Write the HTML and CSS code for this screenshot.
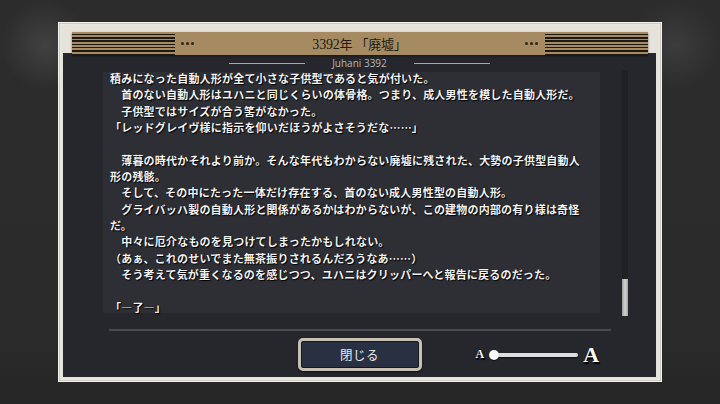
FILE: index.html
```html
<!DOCTYPE html>
<html lang="ja">
<head>
    <meta charset="UTF-8">
    <title>ログ 3392年「廃墟」</title>
    <link rel="stylesheet" href="styles.css">
</head>
<body>
    <div class="stage">
        <div class="frame">
            <div class="band">
                <div class="stripes"></div>
                <div class="dots"><i></i><i></i><i></i></div>
                <div class="title"><span class="num">3392</span>年 「廃墟」</div>
                <div class="dots right"><i></i><i></i><i></i></div>
                <div class="stripes"></div>
            </div>

            <div class="panel">
                <div class="byline">
                    <span class="rule"></span>
                    <span class="author">Juhani 3392</span>
                    <span class="rule"></span>
                </div>

                <div class="content">
                    <div class="story"><div class="story-text">積みになった自動人形が全て小さな子供型であると気が付いた。
　首のない自動人形はユハニと同じくらいの体骨格。つまり、成人男性を模した自動人形だ。
　子供型ではサイズが合う筈がなかった。
「レッドグレイヴ様に指示を仰いだほうがよさそうだな……」

　薄暮の時代かそれより前か。そんな年代もわからない廃墟に残された、大勢の子供型自動人形の残骸。
　そして、その中にたった一体だけ存在する、首のない成人男性型の自動人形。
　グライバッハ製の自動人形と関係があるかはわからないが、この建物の内部の有り様は奇怪だ。
　中々に厄介なものを見つけてしまったかもしれない。
（あぁ、これのせいでまた無茶振りされるんだろうなあ……）
　そう考えて気が重くなるのを感じつつ、ユハニはクリッパーへと報告に戻るのだった。

「―了―」</div></div>
                    <div class="scrollbar"><div class="thumb"></div></div>
                </div>

                <div class="separator"></div>

                <div class="footer">
                    <div></div>
                    <button class="close-btn">閉じる</button>
                    <div class="font-size">
                        <span class="a-small">A</span>
                        <div class="track"><span class="knob"></span></div>
                        <span class="a-big">A</span>
                    </div>
                </div>
            </div>
        </div>
    </div>
</body>
</html>
```

FILE: styles.css
```css
body {
    margin: 0;
    width: 720px;
    height: 404px;
    overflow: hidden;
    font-family: "Noto Sans CJK JP", sans-serif;
    background:
        radial-gradient(circle at 45px 45px, rgba(255,255,255,0.10), rgba(255,255,255,0) 45px),
        radial-gradient(circle at 675px 45px, rgba(255,255,255,0.08), rgba(255,255,255,0) 45px),
        linear-gradient(to bottom, #2c2c2c 0%, #2b2b2b 80%, #262626 100%);
}
.stage {
    display: flex;
    justify-content: center;
    padding-top: 22px;
}
.frame {
    width: 604px;
    height: 360px;
    box-sizing: border-box;
    padding: 10px 6px 5px 5px;
    background: #e6e2dc;
    box-shadow: inset 0 0 0 1px #f4f2ee, inset 0 0 0 2px #cdc8c0, inset 0 0 0 3px #ebe8e2;
    display: flex;
    flex-direction: column;
}

/* header band */
.band {
    position: relative;
    z-index: 1;
    height: 23px;
    margin: 0 8px 0 9px;
    background: #a68b62;
    display: flex;
    align-items: center;
    box-shadow: 0 1px 2px rgba(0,0,0,0.5);
}
.stripes {
    width: 103px;
    height: 100%;
    background: repeating-linear-gradient(to bottom, #a68b62 0, #a68b62 1.8px, #1d1912 1.8px, #1d1912 3.3px);
}
.dots {
    display: flex;
    gap: 2px;
    margin-left: 6px;
}
.dots.right {
    margin-left: 0;
    margin-right: 7px;
}
.dots i {
    width: 3px;
    height: 3px;
    border-radius: 50%;
    background: #2a2419;
}
.title {
    flex: 1;
    text-align: center;
    font-size: 13px;
    color: #201b13;
    font-family: "Liberation Serif", "Noto Sans CJK JP", serif;
    letter-spacing: -0.2px;
}
.title .num {
    font-size: 14px;
}

/* main panel */
.panel {
    flex: 1;
    margin-top: -2px;
    padding: 3px 0 6px;
    background: #26272c;
    display: flex;
    flex-direction: column;
}
.byline {
    height: 14px;
    display: flex;
    justify-content: center;
    align-items: center;
    gap: 27px;
}
.rule {
    width: 76px;
    height: 1px;
    background: #a9a9a9;
}
.author {
    font-family: "Open Sans", sans-serif;
    font-size: 10px;
    color: #b8b8b8;
}
.content {
    height: 246px;
    display: flex;
    padding-left: 40px;
}
.story {
    box-sizing: border-box;
    width: 497px;
    height: 241px;
    margin-top: 2px;
    padding: 0 14px 0 7px;
    background: #2e2f35;
}
.story-text {
    margin-top: -2px;
    white-space: pre-wrap;
    font-size: 11px;
    letter-spacing: 0.2px;
    line-height: 16.35px;
    font-weight: 700;
    color: #f3f3f3;
    text-shadow: 1px 1px 1px #000, 0 0 1px #000;
}
.scrollbar {
    width: 6px;
    margin-left: 22px;
    background: #1f2024;
    display: flex;
    flex-direction: column;
    justify-content: flex-end;
}
.thumb {
    height: 37px;
    background: linear-gradient(to right, #9c9c9c, #d4d4d4 50%, #a4a4a4);
}
.separator {
    height: 2px;
    width: 502px;
    margin: 13px 0 0 46px;
    background: #464a51;
}

/* footer */
.footer {
    margin-top: 7px;
    display: grid;
    grid-template-columns: 1fr 124px 1fr;
    align-items: center;
}
.close-btn {
    width: 124px;
    height: 33px;
    box-sizing: border-box;
    border: 3px solid #c6c1b2;
    border-radius: 5px;
    background: #283042;
    box-shadow: inset 0 0 0 1px #15171c, 0 1px 2px rgba(0,0,0,0.6);
    color: #ececec;
    font-family: "Noto Sans CJK JP", sans-serif;
    font-size: 12.5px;
    letter-spacing: 0.5px;
    padding: 0;
    cursor: pointer;
}
.font-size {
    display: flex;
    align-items: center;
    padding-left: 54px;
}
.a-small, .a-big {
    font-family: "Liberation Serif", serif;
    font-weight: bold;
    color: #fafafa;
    text-shadow: 1px 1px 1px #000, 1px 2px 1px #000;
}
.a-small {
    font-size: 12px;
}
.a-big {
    font-size: 22px;
    margin-left: 5px;
}
.track {
    position: relative;
    width: 84px;
    height: 4px;
    margin-left: 10px;
    border-radius: 2px;
    background: #dedede;
    box-shadow: 0 1px 1px rgba(0,0,0,0.6);
}
.knob {
    position: absolute;
    left: -5px;
    top: -3px;
    width: 10px;
    height: 10px;
    border-radius: 50%;
    background: #f8f8f8;
    box-shadow: 0 1px 1px rgba(0,0,0,0.6);
}
```
